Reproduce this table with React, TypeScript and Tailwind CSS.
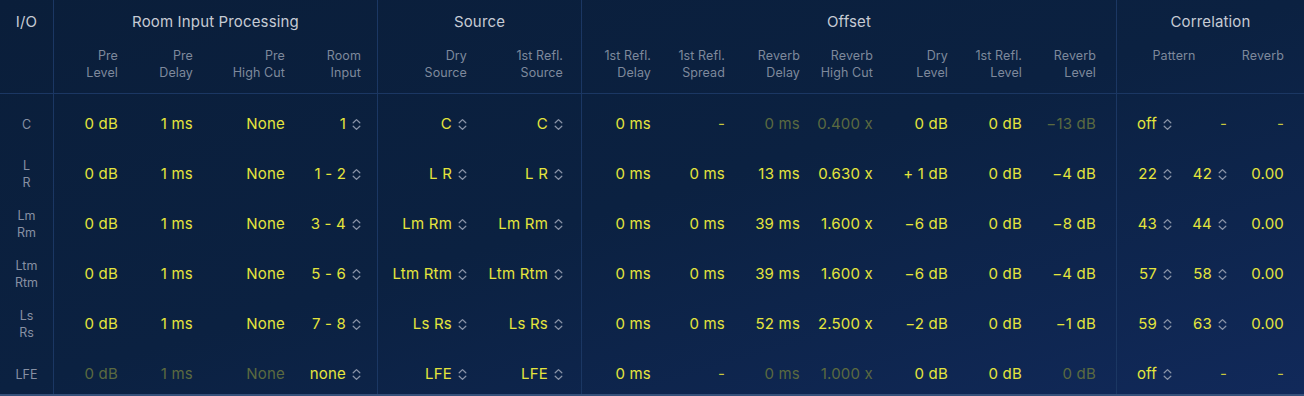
import React from "react";

type Cell = { t: string; dim?: boolean; ch?: boolean; dash?: boolean };

const Chev = () => (
  <svg width="9" height="13" viewBox="0 0 9 13" className="shrink-0">
    <path d="M1.2 4.8 L4.5 1.6 L7.8 4.8" fill="none" stroke="#8a94a8" strokeWidth="1.3" strokeLinecap="round" strokeLinejoin="round" />
    <path d="M1.2 8.2 L4.5 11.4 L7.8 8.2" fill="none" stroke="#8a94a8" strokeWidth="1.3" strokeLinecap="round" strokeLinejoin="round" />
  </svg>
);

const V = (t: string): Cell => ({ t });
const D = (t: string): Cell => ({ t, dim: true });
const C = (t: string): Cell => ({ t, ch: true });
const DASH: Cell = { t: "-", dash: true };

const ValueCell = ({ c, w }: { c: Cell; w: string }) => (
  <div className={`${w} h-[50px] flex items-center justify-end gap-[6px] shrink-0`}>
    <span
      className={
        c.dim
          ? "text-[#5b6a40]"
          : c.dash
          ? "text-[#c9c83c]"
          : "text-[#e5e53c]"
      }
    >
      {c.t}
    </span>
    {c.ch && <Chev />}
  </div>
);

const io = [["C"], ["L", "R"], ["Lm", "Rm"], ["Ltm", "Rtm"], ["Ls", "Rs"], ["LFE"]];

const rip: Cell[][] = [
  [V("0 dB"), V("1 ms"), V("None"), C("1")],
  [V("0 dB"), V("1 ms"), V("None"), C("1 - 2")],
  [V("0 dB"), V("1 ms"), V("None"), C("3 - 4")],
  [V("0 dB"), V("1 ms"), V("None"), C("5 - 6")],
  [V("0 dB"), V("1 ms"), V("None"), C("7 - 8")],
  [D("0 dB"), D("1 ms"), D("None"), C("none")],
];
const ripW = ["w-[64px]", "w-[75px]", "w-[92px]", "w-[76px]"];
const ripH = [["Pre", "Level"], ["Pre", "Delay"], ["Pre", "High Cut"], ["Room", "Input"]];

const src: Cell[][] = [
  [C("C"), C("C")],
  [C("L R"), C("L R")],
  [C("Lm Rm"), C("Lm Rm")],
  [C("Ltm Rtm"), C("Ltm Rtm")],
  [C("Ls Rs"), C("Ls Rs")],
  [C("LFE"), C("LFE")],
];
const srcW = ["w-[89px]", "w-[96px]"];
const srcH = [["Dry", "Source"], ["1st Refl.", "Source"]];

const off: Cell[][] = [
  [V("0 ms"), DASH, D("0 ms"), D("0.400 x"), V("0 dB"), V("0 dB"), D("\u221213 dB")],
  [V("0 ms"), V("0 ms"), V("13 ms"), V("0.630 x"), V("+ 1 dB"), V("0 dB"), V("\u22124 dB")],
  [V("0 ms"), V("0 ms"), V("39 ms"), V("1.600 x"), V("\u22126 dB"), V("0 dB"), V("\u22128 dB")],
  [V("0 ms"), V("0 ms"), V("39 ms"), V("1.600 x"), V("\u22126 dB"), V("0 dB"), V("\u22124 dB")],
  [V("0 ms"), V("0 ms"), V("52 ms"), V("2.500 x"), V("\u22122 dB"), V("0 dB"), V("\u22121 dB")],
  [V("0 ms"), DASH, D("0 ms"), D("1.000 x"), V("0 dB"), V("0 dB"), D("0 dB")],
];
const offW = ["w-[69px]", "w-[74px]", "w-[75px]", "w-[73px]", "w-[75px]", "w-[74px]", "w-[74px]"];
const offH = [
  ["1st Refl.", "Delay"],
  ["1st Refl.", "Spread"],
  ["Reverb", "Delay"],
  ["Reverb", "High Cut"],
  ["Dry", "Level"],
  ["1st Refl.", "Level"],
  ["Reverb", "Level"],
];

const cor: Cell[][] = [
  [C("off"), DASH, DASH],
  [C("22"), C("42"), V("0.00")],
  [C("43"), C("44"), V("0.00")],
  [C("57"), C("58"), V("0.00")],
  [C("59"), C("63"), V("0.00")],
  [C("off"), DASH, DASH],
];
const corW = ["w-[55px]", "w-[55px]", "w-[57px]"];

const GroupTitle = ({ t }: { t: string }) => (
  <div className="h-[44px] flex items-center justify-center text-[15px] tracking-[0.15px] text-[#c6cbd4]">{t}</div>
);

const ColHeads = ({ heads, widths }: { heads: string[][]; widths: string[] }) => (
  <div className="flex pt-[3px] text-[12.5px] leading-[17px] tracking-[0.1px] text-[#7e899c]">
    {heads.map((h, i) => (
      <div key={i} className={`${widths[i]} shrink-0 text-right whitespace-nowrap`}>
        <div>{h[0]}</div>
        <div>{h[1]}</div>
      </div>
    ))}
  </div>
);

const Body = ({ rows, widths }: { rows: Cell[][]; widths: string[] }) => (
  <div className="pt-[5px] text-[15px] font-normal tracking-[0.2px] shrink-0">
    {rows.map((r, i) => (
      <div key={i} className="flex">
        {r.map((c, j) => (
          <ValueCell key={j} c={c} w={widths[j]} />
        ))}
      </div>
    ))}
  </div>
);

const Head = ({ children }: { children: React.ReactNode }) => (
  <div className="h-[94px] shrink-0 border-b border-[#1b3763]">{children}</div>
);

export default function App() {
  return (
    <div
      className="w-[1304px] h-[396px] overflow-hidden flex bg-linear-to-br from-[#0a1e3a] via-[#0b2141] to-[#11295a] border-b-2 border-[#35507a] whitespace-nowrap"
      style={{ fontFamily: "Inter, 'Noto Sans', sans-serif" }}
    >
      {/* I/O */}
      <div className="w-[54px] shrink-0 border-r border-[#1b3763] flex flex-col">
        <Head>
          <GroupTitle t="I/O" />
        </Head>
        <div className="pt-[5px] text-[12.5px] leading-[17px] text-[#8790a3] shrink-0">
          {io.map((l, i) => (
            <div key={i} className="h-[50px] flex flex-col items-center justify-center">
              {l.map((x, k) => (
                <div key={k}>{x}</div>
              ))}
            </div>
          ))}
        </div>
      </div>

      {/* Room Input Processing */}
      <div className="w-[324px] shrink-0 border-r border-[#1b3763] flex flex-col">
        <Head>
          <GroupTitle t="Room Input Processing" />
          <ColHeads heads={ripH} widths={ripW} />
        </Head>
        <Body rows={rip} widths={ripW} />
      </div>

      {/* Source */}
      <div className="w-[204px] shrink-0 border-r border-[#1b3763] flex flex-col">
        <Head>
          <GroupTitle t="Source" />
          <ColHeads heads={srcH} widths={srcW} />
        </Head>
        <Body rows={src} widths={srcW} />
      </div>

      {/* Offset */}
      <div className="w-[535px] shrink-0 border-r border-[#1b3763] flex flex-col">
        <Head>
          <GroupTitle t="Offset" />
          <ColHeads heads={offH} widths={offW} />
        </Head>
        <Body rows={off} widths={offW} />
      </div>

      {/* Correlation */}
      <div className="flex-1 flex flex-col">
        <Head>
          <GroupTitle t="Correlation" />
          <div className="flex pt-[3px] text-[12.5px] leading-[17px] tracking-[0.1px] text-[#7e899c]">
            <div className="w-[110px] shrink-0 text-center pl-[4px]">Pattern</div>
            <div className="w-[57px] shrink-0 text-right">Reverb</div>
          </div>
        </Head>
        <Body rows={cor} widths={corW} />
      </div>
    </div>
  );
}
